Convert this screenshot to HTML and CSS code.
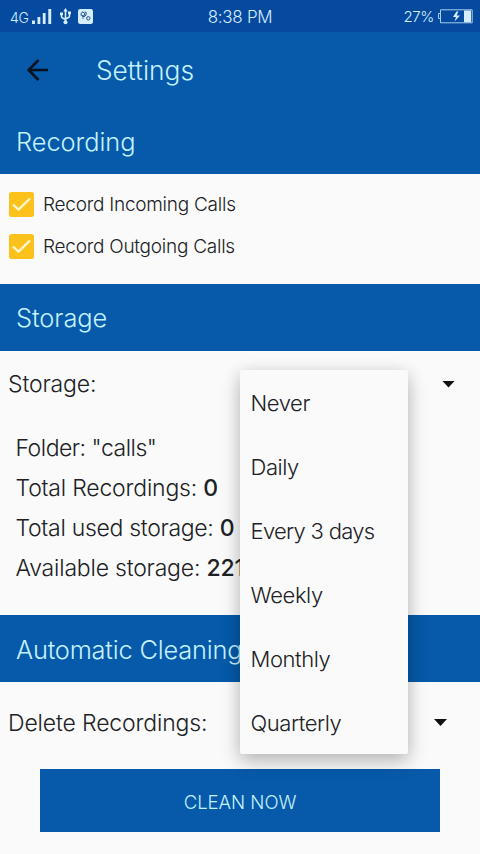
FILE: index.html
```html
<!DOCTYPE html>
<html lang="en">
<head>
<meta charset="utf-8">
<title>Settings</title>
<link rel="stylesheet" href="styles.css">
</head>
<body>
<div class="screen">
  <header class="status">
    <div class="status-left">
      <span class="network">4G</span>
      <svg class="signal" width="20" height="16" viewBox="0 0 20 16"><path d="M0 11.500h3V15H0zM5.500 8h2.800v7H5.500zM10.800 4h2.800v11h-2.800zM16.300 0h2.900v15h-2.900z"/></svg>
      <svg class="usb" width="11" height="17" viewBox="0 0 11 17"><path d="M5.500 2v11M1.500 5.500v3q0 1 1 1.500l3 1.500M9.500 4.500V8q0 1-1 1.500l-3 1.500" fill="none" stroke="currentColor" stroke-width="1.600"/><path d="M5.500 0l2.200 3.500H3.300zM0 4.500h3v2.800H0zM8 3.500h3v2.800H8z"/><circle cx="5.500" cy="14.200" r="2"/></svg>
      <svg class="app-badge" width="15" height="15" viewBox="0 0 15 15"><rect width="15" height="15" rx="2.200"/><g fill="none" stroke="#244f85" stroke-width="1"><path d="M3 4.500l2-1.700 1.800 2-1 2.200-2.500-.5zM6.500 3l1.700.5-.2 2.700-2 1.500-2-.5M5 8.300v1.500"/><circle cx="10.300" cy="9.300" r="1.700"/></g></svg>
    </div>
    <span class="clock">8:38 PM</span>
    <div class="status-right">
      <span class="percent">27%</span>
      <svg class="battery" width="35" height="15" viewBox="0 0 35 15"><path d="M2 4.500H.500v5H2M2.500.800h31.700v13H2.500z" fill="none" stroke="#a9cdee" stroke-width="1"/><path d="M26 1.500h7v11.700h-7zM18.500 2.500L15 8h3l-1.500 4.500L22 6.500h-3.300l1.600-4z"/></svg>
    </div>
  </header>
  <div class="toolbar">
    <svg class="back" width="22" height="22" viewBox="0 0 22 22"><path d="M21 11H1.700M11.500 1L1.700 11l9.800 10" fill="none" stroke="#071321" stroke-width="2.700"/></svg>
    <h1 class="title">Settings</h1>
  </div>
  <h2 class="section recording"><span>Recording</span></h2>
  <div class="checks">
    <label class="check"><svg class="box" width="25" height="25" viewBox="0 0 25 25"><rect width="25" height="25" rx="2.500" fill="#fcc21b"/><path d="M4 12.500l5.500 5.200L21 6.500" fill="none" stroke="#fff7cf" stroke-width="2.400"/></svg><span>Record Incoming Calls</span></label>
    <label class="check"><svg class="box" width="25" height="25" viewBox="0 0 25 25"><rect width="25" height="25" rx="2.500" fill="#fcc21b"/><path d="M4 12.500l5.500 5.200L21 6.500" fill="none" stroke="#fff7cf" stroke-width="2.400"/></svg><span>Record Outgoing Calls</span></label>
  </div>
  <h2 class="section storage-title"><span>Storage</span></h2>
  <div class="storage">
    <div class="field"><span>Storage:</span><i class="caret"></i></div>
    <div class="details">
      <p class="folder">Folder: "calls"</p>
      <p>Total Recordings: <b>0</b></p>
      <p class="used">Total used storage: <b>0</b></p>
      <p>Available storage: <b>221</b></p>
    </div>
  </div>
  <h2 class="section automatic"><span>Automatic Cleaning</span></h2>
  <div class="cleaning">
    <div class="field delete"><span>Delete Recordings:</span><i class="caret"></i></div>
    <button class="clean">CLEAN NOW</button>
  </div>
  <ul class="menu">
    <li>Never</li>
    <li>Daily</li>
    <li class="spaced">Every 3 days</li>
    <li>Weekly</li>
    <li>Monthly</li>
    <li>Quarterly</li>
  </ul>
</div>
</body>
</html>
```
FILE: styles.css
```css
* { box-sizing: border-box; }
body, h1, h2, p, ul { margin: 0; padding: 0; }
body { background: #fafafa; }
.screen {
  position: relative;
  width: 480px;
  height: 854px;
  overflow: hidden;
  background: #fafafa;
  color: #202124;
  font-family: Inter, "Liberation Sans", sans-serif;
  font-weight: 350;
  font-size: 23px;
  white-space: nowrap;
}
svg { display: block; flex: none; }
.status {
  display: grid;
  grid-template-columns: 1fr auto 1fr;
  align-items: center;
  height: 32px;
  padding: 1px 7px 0 10px;
  background: #064a9f;
  color: #d5eefe;
  fill: #d5eefe;
}
.status-left, .status-right { display: flex; align-items: center; }
.status-right { justify-content: flex-end; gap: 4px; }
.network { width: 22px; font-size: 14px; letter-spacing: -.3px; padding-top: 2px; }
.usb { margin-left: 8px; }
.app-badge { margin-left: 7px; }
.clock { margin-left: -3px; font-size: 17px; letter-spacing: -.3px; }
.percent { font-size: 15px; letter-spacing: -.4px; }
.toolbar {
  display: flex;
  align-items: center;
  height: 76px;
  padding-left: 27px;
  background: #065aa9;
}
.title {
  margin-left: 47px;
  color: #c4f1fe;
  font-size: 26.3px;
  font-weight: 350;
}
.section {
  display: flex;
  align-items: center;
  height: 67px;
  padding: 0 0 0 16px;
  background: #065aa9;
  color: #c4f1fe;
  font-size: 25.4px;
  font-weight: 350;
  letter-spacing: -.05px;
}
.recording { height: 66px; }
.automatic { padding-top: 2px; letter-spacing: -.2px; }
.checks { height: 110px; padding: 9px 9px 0; }
.check {
  display: flex;
  align-items: center;
  gap: 9px;
  height: 42px;
  font-size: 19px;
  letter-spacing: -.25px;
}
.storage { height: 264px; }
.field {
  display: flex;
  align-items: center;
  justify-content: space-between;
  height: 66px;
  padding: 0 25px 0 8px;
  letter-spacing: -.15px;
}
.caret {
  width: 13px;
  height: 7px;
  background: #101010;
  clip-path: polygon(0 0, 100% 0, 50% 100%);
}
.details { padding: 11px 15.5px 0; letter-spacing: -.2px; }
.details p { height: 40px; line-height: 40px; }
.details b { font-weight: 500; }
.details .folder { letter-spacing: -.5px; }
.details .used { letter-spacing: -.3px; }
.delete { height: 81px; padding-right: 33px; }
.clean {
  display: block;
  width: 400px;
  height: 63px;
  margin: 6px 0 0 40px;
  padding: 2px 0 0;
  border: 0;
  background: #065aa9;
  color: #c4f1fe;
  font: 350 18.6px Inter, "Liberation Sans", sans-serif;
  letter-spacing: -.05px;
}
.menu {
  position: absolute;
  left: 240px;
  top: 370px;
  width: 168px;
  height: 384px;
  border-radius: 2px;
  background: #fafafa;
  box-shadow: 0 8px 20px rgba(0, 0, 0, .22), 0 2px 16px rgba(0, 0, 0, .1);
  list-style: none;
  font-size: 22px;
  letter-spacing: -.42px;
}
.menu li { height: 64px; padding-left: 10.5px; line-height: 66px; }
.menu .spaced { letter-spacing: -.7px; }
```
